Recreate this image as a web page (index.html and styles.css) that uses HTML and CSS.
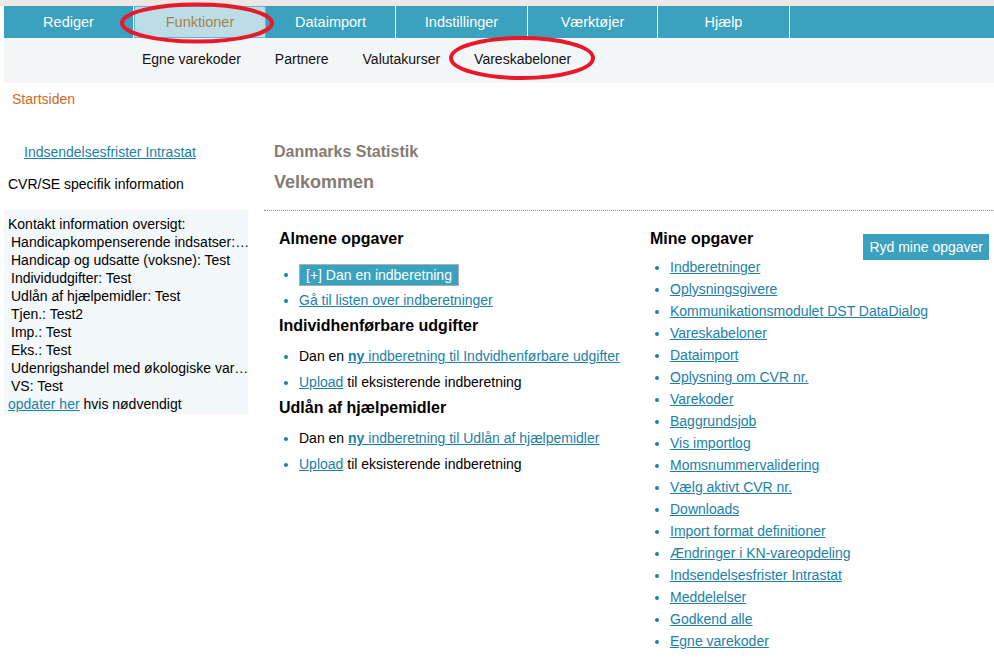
FILE: index.html
```html
<!DOCTYPE html>
<html lang="da">
<head>
<meta charset="utf-8">
<title>Danmarks Statistik</title>
<link rel="stylesheet" href="styles.css">
</head>
<body>
<div class="topstrip"></div>
<div class="page">
  <nav class="mainnav">
    <a class="navitem w130">Rediger</a>
    <a class="navitem w132 active">Funktioner</a>
    <a class="navitem w130">Dataimport</a>
    <a class="navitem w132">Indstillinger</a>
    <a class="navitem w130">Værktøjer</a>
    <a class="navitem w132">Hjælp</a>
    <span class="navfill"></span>
  </nav>
  <div class="subnav">
    <a class="subitem">Egne varekoder</a>
    <a class="subitem">Partnere</a>
    <a class="subitem">Valutakurser</a>
    <a class="subitem">Vareskabeloner</a>
  </div>
  <div class="crumb">Startsiden</div>
  <div class="content">
    <aside class="sidebar">
      <a class="link sidelink" href="#">Indsendelsesfrister Intrastat</a>
      <div class="cvr">CVR/SE specifik information</div>
      <div class="infobox">
        <div class="line">Kontakt information oversigt:</div>
        <div class="line ind">Handicapkompenserende indsatser: Test</div>
        <div class="line ind">Handicap og udsatte (voksne): Test</div>
        <div class="line ind">Individudgifter: Test</div>
        <div class="line ind">Udlån af hjælpemidler: Test</div>
        <div class="line ind">Tjen.: Test2</div>
        <div class="line ind">Imp.: Test</div>
        <div class="line ind">Eks.: Test</div>
        <div class="line ind">Udenrigshandel med økologiske varer: Test</div>
        <div class="line ind">VS: Test</div>
        <div class="line"><a class="link" href="#">opdater her</a> hvis nødvendigt</div>
      </div>
    </aside>
    <main class="main">
      <div class="org">Danmarks Statistik</div>
      <div class="welcome">Velkommen</div>
      <div class="divider"></div>
      <div class="cols">
        <section class="col left">
          <h3 class="h">Almene opgaver</h3>
          <ul class="tasks first">
            <li><span class="btn small">[+] Dan en indberetning</span></li>
            <li><a class="link" href="#">Gå til listen over indberetninger</a></li>
          </ul>
          <h3 class="h sub">Individhenførbare udgifter</h3>
          <ul class="tasks">
            <li>Dan en <a class="link" href="#"><b>ny</b> indberetning til Indvidhenførbare udgifter</a></li>
            <li><a class="link" href="#">Upload</a> til eksisterende indberetning</li>
          </ul>
          <h3 class="h sub">Udlån af hjælpemidler</h3>
          <ul class="tasks">
            <li>Dan en <a class="link" href="#"><b>ny</b> indberetning til Udlån af hjælpemidler</a></li>
            <li><a class="link" href="#">Upload</a> til eksisterende indberetning</li>
          </ul>
        </section>
        <section class="col right">
          <div class="righthead">
            <h3 class="h">Mine opgaver</h3>
            <span class="btn clear">Ryd mine opgaver</span>
          </div>
          <ul class="mylist">
            <li><a class="link" href="#">Indberetninger</a></li>
            <li><a class="link" href="#">Oplysningsgivere</a></li>
            <li><a class="link" href="#">Kommunikationsmodulet DST DataDialog</a></li>
            <li><a class="link" href="#">Vareskabeloner</a></li>
            <li><a class="link" href="#">Dataimport</a></li>
            <li><a class="link" href="#">Oplysning om CVR nr.</a></li>
            <li><a class="link" href="#">Varekoder</a></li>
            <li><a class="link" href="#">Baggrundsjob</a></li>
            <li><a class="link" href="#">Vis importlog</a></li>
            <li><a class="link" href="#">Momsnummervalidering</a></li>
            <li><a class="link" href="#">Vælg aktivt CVR nr.</a></li>
            <li><a class="link" href="#">Downloads</a></li>
            <li><a class="link" href="#">Import format definitioner</a></li>
            <li><a class="link" href="#">Ændringer i KN-vareopdeling</a></li>
            <li><a class="link" href="#">Indsendelsesfrister Intrastat</a></li>
            <li><a class="link" href="#">Meddelelser</a></li>
            <li><a class="link" href="#">Godkend alle</a></li>
            <li><a class="link" href="#">Egne varekoder</a></li>
          </ul>
        </section>
      </div>
    </main>
  </div>
</div>
<svg class="marks" width="994" height="659" viewBox="0 0 994 659" aria-hidden="true">
  <ellipse cx="197" cy="23" rx="75" ry="18.5" fill="none" stroke="#e8192b" stroke-width="4"/>
  <ellipse cx="522" cy="58" rx="71" ry="20" fill="none" stroke="#e8192b" stroke-width="4"/>
</svg>
</body>
</html>
```
FILE: styles.css
```css
html, body {
  margin: 0;
  padding: 0;
  background: #ffffff;
  font-family: "Liberation Sans", Arial, sans-serif;
  font-size: 14px;
  color: #000000;
}

.topstrip {
  height: 6px;
  background: #ede8e5;
}

.page {
  padding-left: 4px;
}

.mainnav {
  display: flex;
  height: 32px;
  background: #3aa1bf;
}

.navitem {
  box-sizing: border-box;
  display: flex;
  align-items: center;
  justify-content: center;
  color: #ffffff;
  font-size: 14.5px;
  border-right: 1px solid #ffffff;
  text-decoration: none;
}

.w130 { width: 130px; }
.w132 { width: 132px; }

.navitem.active {
  background: #bcdde6;
  color: #a3834a;
  border: 1px solid #62b6cf;
  border-radius: 2px 2px 0 0;
}

.navfill {
  flex: 1;
}

.subnav {
  display: flex;
  align-items: center;
  height: 45px;
  background: #f3f6f7;
  padding-left: 121px;
}

.subitem {
  padding: 0 17px;
  color: #111111;
  font-size: 14px;
  position: relative;
  top: -2px;
}

.crumb {
  margin-top: 7px;
  padding-left: 8px;
  line-height: 18px;
  color: #d2691e;
}

.content {
  display: flex;
  margin-top: 33px;
}

.sidebar {
  width: 244px;
  flex: none;
  padding-top: 2px;
}

.link {
  color: #1c80a7;
  text-decoration: underline;
}

.sidelink {
  display: block;
  margin-left: 20px;
  line-height: 18px;
}

.cvr {
  margin-top: 14px;
  padding-left: 4px;
  line-height: 18px;
}

.infobox {
  margin-top: 17px;
  background: #f3f8fa;
  padding: 5px 0 1px 4px;
}

.line {
  line-height: 18px;
  white-space: nowrap;
  overflow: hidden;
  text-overflow: ellipsis;
}

.line.ind {
  padding-left: 3px;
  margin-right: -3px;
}

.main {
  flex: 1;
  margin-left: 16px;
  padding-top: 1px;
}

.org {
  padding-left: 10px;
  font-size: 16px;
  font-weight: bold;
  line-height: 20px;
  color: #857b73;
}

.welcome {
  margin-top: 9px;
  padding-left: 10px;
  font-size: 18px;
  font-weight: bold;
  line-height: 22px;
  color: #857b73;
}

.divider {
  margin-top: 17px;
  border-top: 1px dotted #8c8c8c;
}

.cols {
  display: grid;
  grid-template-columns: 371px 1fr;
  margin-top: 18px;
}

.col {
  padding-left: 15px;
}

.h {
  margin: 0;
  font-size: 16px;
  font-weight: bold;
  line-height: 20px;
}

.h.sub {
  margin-top: 3px;
}

ul {
  margin: 0;
  padding-left: 20px;
}

li::marker {
  color: #1c80a7;
}

.tasks {
  margin-top: 7px;
}

.tasks.first {
  margin-top: 12px;
}

.tasks li {
  line-height: 26px;
}

.btn {
  display: inline-block;
  background: #3aa1bf;
  color: #ffffff;
  white-space: nowrap;
}

.btn.small {
  box-sizing: border-box;
  height: 22px;
  line-height: 20px;
  padding: 0 6px;
  border: 1px solid #a7b0b4;
  vertical-align: middle;
}

.righthead {
  display: flex;
  justify-content: space-between;
  align-items: flex-start;
  height: 20px;
}

.btn.clear {
  height: 26px;
  line-height: 26px;
  padding: 0 6px;
  margin-top: 5px;
  margin-right: 5px;
}

.mylist {
  margin-top: 7px;
}

.mylist li {
  line-height: 22px;
}

.marks {
  position: absolute;
  top: 0;
  left: 0;
  pointer-events: none;
}
```
